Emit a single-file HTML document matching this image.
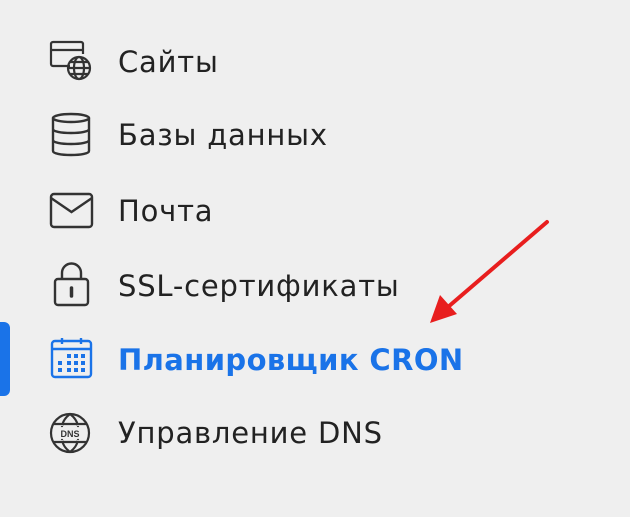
<!DOCTYPE html><html><head><style>
body{margin:0;width:630px;height:517px;background:#efefef;font-family:"DejaVu Sans","Liberation Sans",sans-serif;position:relative;overflow:hidden}
.t{position:absolute;left:118px;font-size:29px;color:#222;line-height:34px;letter-spacing:0.8px;white-space:nowrap}
.b{color:#1a73e8;font-weight:bold;letter-spacing:0.4px}
svg{position:absolute}
</style></head><body>
<div style="position:absolute;left:0;top:322px;width:10px;height:74px;background:#1a73e8;border-radius:0 6px 6px 0"></div>
<svg style="left:48px;top:40px" width="48" height="42" viewBox="0 0 48 42" fill="none" stroke="#333" stroke-width="2.2"><path d="M22 26H5a2 2 0 0 1-2-2V4a2 2 0 0 1 2-2h28a2 2 0 0 1 2 2v10"/><path d="M3 10h32"/><circle cx="31" cy="28" r="11"/><ellipse cx="31" cy="28" rx="5" ry="11"/><path d="M20 28h22M22 22h18M22 34h18"/></svg>
<svg style="left:50px;top:112px" width="42" height="46" viewBox="0 0 42 46" fill="none" stroke="#333" stroke-width="2.4"><ellipse cx="21" cy="6" rx="18" ry="4"/><path d="M3 6v33c0 2.5 8 4 18 4s18-1.5 18-4V6M3 17c0 2.5 8 4 18 4s18-1.5 18-4M3 28c0 2.5 8 4 18 4s18-1.5 18-4"/></svg>
<svg style="left:49px;top:192px" width="46" height="38" viewBox="0 0 46 38" fill="none" stroke="#333" stroke-width="2.4"><rect x="2" y="2" width="41" height="33" rx="3"/><path d="M2 6l20.5 14L43 6"/></svg>
<svg style="left:52px;top:260px" width="40" height="48" viewBox="0 0 40 48" fill="none" stroke="#333" stroke-width="2.4"><rect x="3" y="19" width="33" height="26" rx="3"/><path d="M10 19v-6a9.5 9.5 0 0 1 19 0v6"/><path d="M19.5 28v8" stroke-width="3.5" stroke-linecap="round"/></svg>
<svg style="left:49px;top:336px" width="46" height="44" viewBox="0 0 46 44" fill="none" stroke="#1a73e8" stroke-width="2.4"><rect x="3" y="5" width="39" height="36" rx="3"/><path d="M3 13h39M13 2v6M32 2v6"/><g fill="#1a73e8" stroke="none"><rect x="18" y="18" width="4" height="4"/><rect x="25" y="18" width="4" height="4"/><rect x="32" y="18" width="4" height="4"/><rect x="9" y="25" width="4" height="4"/><rect x="18" y="25" width="4" height="4"/><rect x="25" y="25" width="4" height="4"/><rect x="32" y="25" width="4" height="4"/><rect x="9" y="32" width="4" height="4"/><rect x="18" y="32" width="4" height="4"/><rect x="25" y="32" width="4" height="4"/><rect x="32" y="32" width="4" height="4"/></g></svg>
<svg style="left:49px;top:412px" width="44" height="44" viewBox="0 0 44 44" fill="none" stroke="#333" stroke-width="2.2"><circle cx="21" cy="21" r="19"/><path d="M21 2c-8 6-8 13-8 12M21 2c8 6 8 13 8 12M21 40c-8-6-8-13-8-12M21 40c8-6 8-13 8-12M5 12h32M5 30h32"/><text x="21" y="25" font-size="9" font-family="Liberation Sans" fill="#333" stroke="none" text-anchor="middle" font-weight="bold">DNS</text></svg>
<div class="t" style="top:45px">Сайты</div>
<div class="t" style="top:118px">Базы данных</div>
<div class="t" style="top:194px">Почта</div>
<div class="t" style="top:269px">SSL-сертификаты</div>
<div class="t b" style="top:343px">Планировщик CRON</div>
<div class="t" style="top:416px">Управление DNS</div>
<svg style="left:0;top:0" width="630" height="517"><path d="M547 222L448 307" stroke="#e81e1e" stroke-width="4" stroke-linecap="round"/><path d="M430 323l10-28 17 19z" fill="#e81e1e"/></svg>
</body></html>
